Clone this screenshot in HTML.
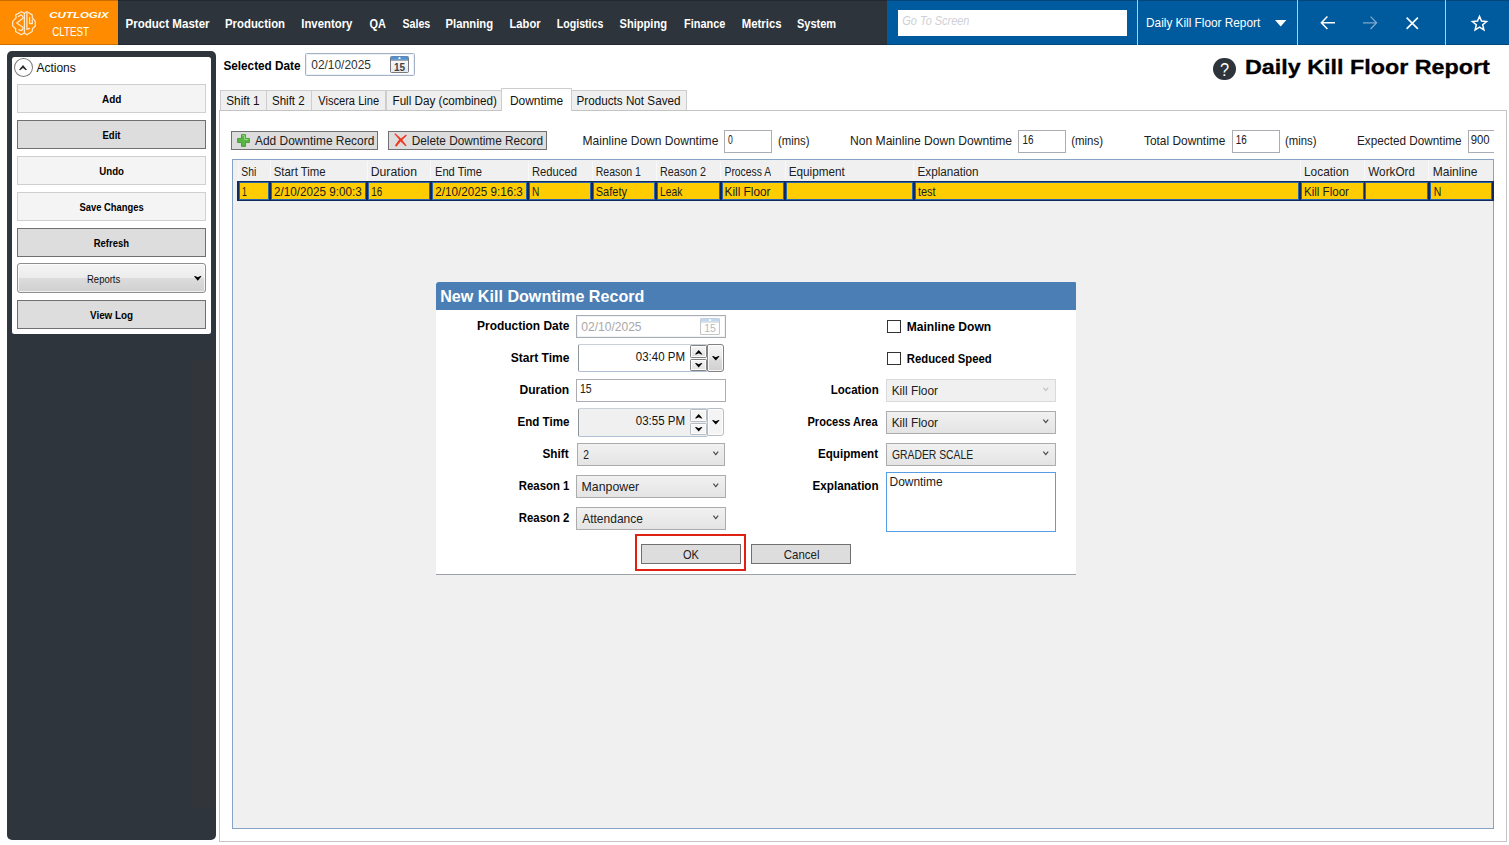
<!DOCTYPE html>
<html><head><meta charset="utf-8"><title>Daily Kill Floor Report</title>
<style>
html,body{margin:0;padding:0;}
body{width:1509px;height:845px;position:relative;overflow:hidden;background:#fff;font-family:"Liberation Sans",sans-serif;font-size:12px;}
.a{position:absolute;box-sizing:border-box;}
.t{position:absolute;white-space:nowrap;line-height:1;transform-origin:0 0;font-family:"Liberation Sans",sans-serif;}
svg{position:absolute;overflow:visible;}
.btn{background:#dddddd;border:1px solid #707070;}
.btnl{background:#f4f4f4;border:1px solid #cfcfcf;}
.combo{background:linear-gradient(#f1f1f1,#e4e4e4);border:1px solid #acacac;}
.inp{background:#fff;border:1px solid #abadb3;}
.tab{background:#efefef;border:1px solid #cdcdcd;border-bottom:none;}
.cell{background:#ffcc00;border:1px solid #2a66ad;}

</style></head>
<body>
<!-- top bar -->
<div class="a" style="left:0;top:0;width:117.5px;height:44.8px;background:#ff8c00"></div>
<div class="a" style="left:117.5px;top:0;width:769.5px;height:44.8px;background:#2d343b"></div>
<div class="a" style="left:887px;top:0;width:622px;height:44.8px;background:#005a9e"></div>
<div class="a" style="left:0;top:0;width:1509px;height:1px;background:rgba(0,0,0,.22)"></div>
<div class="a" style="left:0;top:43.8px;width:1509px;height:1px;background:rgba(0,0,0,.2)"></div>
<div class="a" style="left:897.5px;top:10px;width:229.3px;height:25.5px;background:#fff"></div>
<div class="a" style="left:1136.6px;top:0;width:1px;height:44.8px;background:rgba(255,255,255,.7)"></div>
<div class="a" style="left:1296.6px;top:0;width:1px;height:44.8px;background:rgba(255,255,255,.7)"></div>
<div class="a" style="left:1444.6px;top:0;width:1px;height:44.8px;background:rgba(255,255,255,.7)"></div>
<!-- logo brain -->
<svg style="left:12px;top:11.2px" width="24" height="24.4" viewBox="0 0 24 24.4" fill="none" stroke="#ffe9cc" stroke-width="1.25" stroke-linecap="round" stroke-linejoin="round">
<path d="M12.3 2.3 9.3 0.7 3.7 3.9 4.1 6.9 0.7 10.4V15L3.7 17.8 3.5 20.5 9.3 23.7 12.3 22"/>
<path d="M12.3 2.3 14.9 0.7 20.2 3.9 20.4 6.9 23.3 10.4V15L20.4 17.8 20.2 20.5 14.9 23.7 12.3 22"/>
<path d="M12.4 2.4V22"/>
<path d="M6.2 5.5 9.3 3.9 11 5.8V7.3L4.7 12.1 10.9 16.2V18.2L9.3 19.6 6.8 18.8"/>
<path d="M14.9 2.2V18.4L17.6 17.4"/>
<path d="M17.6 6.4V12.6H20.3V9"/>
</svg>
<!-- top icons -->
<svg style="left:1274.5px;top:19.5px" width="11.4" height="6.6" viewBox="0 0 11.4 6.6"><path d="M0 0h11.4L5.7 6.6z" fill="#fff"/></svg>
<svg style="left:1320px;top:15px" width="16" height="16" viewBox="0 0 16 16" fill="none" stroke="#fff" stroke-width="1.5"><path d="M15 7.8H1.6M7.4 1.6 1.4 7.8 7.4 14"/></svg>
<svg style="left:1362px;top:15px" width="16" height="16" viewBox="0 0 16 16" fill="none" stroke="#7fa9cc" stroke-width="1.3"><path d="M1 7.8h13.4M8.6 1.6 14.6 7.8 8.6 14"/></svg>
<svg style="left:1405.5px;top:16.8px" width="12.5" height="12.5" viewBox="0 0 12.5 12.5" fill="none" stroke="#fff" stroke-width="1.6"><path d="M.6.6 11.9 11.9M11.9.6.6 11.9"/></svg>
<svg style="left:1470.5px;top:14.8px" width="17" height="16" viewBox="0 0 17 16" fill="none" stroke="#fff" stroke-width="1.5" stroke-linejoin="miter"><path d="M8.5 1.4 10.5 6.1 15.6 6.5 11.7 9.8 12.9 14.8 8.5 12.1 4.1 14.8 5.3 9.8 1.4 6.5 6.5 6.1Z"/></svg>
<!-- help icon -->
<div class="a" style="left:1213.3px;top:57.7px;width:22.8px;height:22.8px;border-radius:50%;background:#2d343b"></div>

<!-- sidebar -->
<div class="a" style="left:6.8px;top:51.2px;width:209.6px;height:788.8px;background:#2e353d;border-radius:5px"></div>
<div class="a" style="left:191.8px;top:359px;width:24.4px;height:448.3px;background:#32353a"></div>
<div class="a" style="left:12.2px;top:57px;width:198.8px;height:277.3px;background:#fff;border-radius:2.5px"></div>
<div class="a" style="left:13.6px;top:58.1px;width:19.2px;height:19.3px;border-radius:50%;border:1.5px solid #7a7a7a"></div>
<svg style="left:19.1px;top:65px" width="8" height="5.3" viewBox="0 0 7.4 4.5" preserveAspectRatio="none"><path d="M0 4 1.1 4.5 3.7 2.6 6.3 4.5 7.4 4 3.7 0Z" fill="#2b2b2b"/></svg>
<div class="a btnl" style="left:17.4px;top:83.6px;width:188.2px;height:29.6px"></div>
<div class="a btn"  style="left:17.4px;top:119.6px;width:188.2px;height:29.6px"></div>
<div class="a btnl" style="left:17.4px;top:155.6px;width:188.2px;height:29.6px"></div>
<div class="a btnl" style="left:17.4px;top:191.6px;width:188.2px;height:29.6px"></div>
<div class="a btn"  style="left:17.4px;top:227.6px;width:188.2px;height:29.6px"></div>
<div class="a" style="left:17.4px;top:263.4px;width:188.2px;height:29.8px;border:1px solid #8e8e8e;border-radius:3px;background:linear-gradient(#f4f4f4 0%,#ececec 48%,#dcdcdc 52%,#d0d0d0 100%);box-shadow:inset 0 0 0 1px rgba(255,255,255,.7)"></div>
<svg style="left:194.3px;top:275.8px" width="7.5" height="4.7" viewBox="0 0 7.4 4.5" preserveAspectRatio="none"><path d="M0 .3 1.1 0 3.7 1.2 6.3 0 7.4 .3 3.7 4.5Z" fill="#000"/></svg>
<div class="a btn"  style="left:17.4px;top:299.6px;width:188.2px;height:29.6px"></div>

<!-- date input -->
<div class="a" style="left:305.3px;top:52.8px;width:110px;height:23px;background:#fff;border:1px solid #a3b2c6;border-radius:1.5px;box-shadow:inset 0 0 0 1px #edf1f6"></div>
<svg style="left:390px;top:55.8px" width="19" height="17" viewBox="0 0 19 17">
<defs><linearGradient id="cg" x1="0" y1="0" x2="0" y2="1"><stop offset="0" stop-color="#fff"/><stop offset="1" stop-color="#e4e8ee"/></linearGradient></defs>
<rect x=".5" y=".5" width="18" height="16" rx="1" fill="url(#cg)" stroke="#767a80"/>
<rect x=".9" y=".5" width="17.2" height="3.3" fill="#4f92d8"/>
<rect x=".5" y="3.8" width="18" height=".8" fill="#6d7278"/>
<circle cx="9.5" cy="2.2" r="1.1" fill="#fff"/>
<text x="9.6" y="14.5" font-family="Liberation Sans, sans-serif" font-size="10" font-weight="bold" text-anchor="middle" fill="#444">15</text>
</svg>

<!-- tab panel -->
<div class="a tab" style="left:220.4px;top:90.4px;width:46.2px;height:20.4px"></div>
<div class="a tab" style="left:266.2px;top:90.4px;width:45.4px;height:20.4px"></div>
<div class="a tab" style="left:311.3px;top:90.4px;width:75.2px;height:20.4px"></div>
<div class="a tab" style="left:386.2px;top:90.4px;width:116px;height:20.4px"></div>
<div class="a tab" style="left:571.4px;top:90.4px;width:115.6px;height:20.4px"></div>
<div class="a" style="left:218.8px;top:110.2px;width:1288.6px;height:732px;background:#fff;border:1px solid #c4c4c4"></div>
<div class="a tab" style="left:501.4px;top:88.3px;width:70.8px;height:23.2px;background:#fff"></div>

<!-- toolbar -->
<div class="a btn" style="left:231.2px;top:131.4px;width:147px;height:18.2px"></div>
<div class="a btn" style="left:388.2px;top:131.4px;width:159.2px;height:18.2px"></div>
<svg style="left:237.2px;top:133.5px" width="13" height="13" viewBox="0 0 12.8 12.8"><path d="M4.4.6h4v3.8h3.8v4H8.4v3.8h-4V8.4H.6v-4h3.8z" fill="#58b544" stroke="#3f9c30" stroke-width=".9" stroke-linejoin="round"/><path d="M5.3 1.6h2.2v3.8h3.6" fill="none" stroke="#9cdc8a" stroke-width=".9"/></svg>
<svg style="left:394px;top:133.4px" width="13.2" height="14" viewBox="0 0 13.2 14" fill="#ee3b1f"><path d="M.3 1 1.2.2 7 5.6 12 1.4 12.9 2.4 8.3 7 12.6 12.4 11.6 13.2 6.6 8.4 2.4 13.8.9 12.6 5.2 6.6Z"/></svg>
<div class="a inp" style="left:724.4px;top:130.4px;width:47.8px;height:22.2px"></div>
<div class="a inp" style="left:1018px;top:130.4px;width:47.8px;height:22.2px"></div>
<div class="a inp" style="left:1232px;top:130.4px;width:47.8px;height:22.2px"></div>
<div class="a inp" style="left:1467.6px;top:130.4px;width:26.8px;height:22.2px;border-right:none"></div>

<!-- grid -->
<div class="a" style="left:231.6px;top:159.4px;width:1262.8px;height:669.8px;background:#f0f0f0;border:1px solid #86a2c5"></div>
<div class="a" style="left:237.4px;top:181px;width:1256.2px;height:19.8px;background:#10295f"></div>
<div class="a cell" style="left:239.00px;top:182.1px;width:30.10px;height:17.7px"></div>
<div class="a cell" style="left:270.90px;top:182.1px;width:95.20px;height:17.7px"></div>
<div class="a cell" style="left:367.90px;top:182.1px;width:61.95px;height:17.7px"></div>
<div class="a cell" style="left:431.65px;top:182.1px;width:95.45px;height:17.7px"></div>
<div class="a cell" style="left:528.90px;top:182.1px;width:62.20px;height:17.7px"></div>
<div class="a cell" style="left:592.90px;top:182.1px;width:62.45px;height:17.7px"></div>
<div class="a cell" style="left:657.15px;top:182.1px;width:62.70px;height:17.7px"></div>
<div class="a cell" style="left:721.65px;top:182.1px;width:62.45px;height:17.7px"></div>
<div class="a cell" style="left:785.90px;top:182.1px;width:126.95px;height:17.7px"></div>
<div class="a cell" style="left:914.65px;top:182.1px;width:384.45px;height:17.7px"></div>
<div class="a cell" style="left:1300.90px;top:182.1px;width:62.70px;height:17.7px"></div>
<div class="a cell" style="left:1365.40px;top:182.1px;width:62.45px;height:17.7px"></div>
<div class="a cell" style="left:1429.65px;top:182.1px;width:62.85px;height:17.7px"></div>
<div class="a" style="left:238.10px;top:161px;width:1px;height:19.5px;background:#f9f9f9"></div>
<div class="a" style="left:269.50px;top:161px;width:1px;height:19.5px;background:#f9f9f9"></div>
<div class="a" style="left:366.50px;top:161px;width:1px;height:19.5px;background:#f9f9f9"></div>
<div class="a" style="left:430.25px;top:161px;width:1px;height:19.5px;background:#f9f9f9"></div>
<div class="a" style="left:527.50px;top:161px;width:1px;height:19.5px;background:#f9f9f9"></div>
<div class="a" style="left:591.50px;top:161px;width:1px;height:19.5px;background:#f9f9f9"></div>
<div class="a" style="left:655.75px;top:161px;width:1px;height:19.5px;background:#f9f9f9"></div>
<div class="a" style="left:720.25px;top:161px;width:1px;height:19.5px;background:#f9f9f9"></div>
<div class="a" style="left:784.50px;top:161px;width:1px;height:19.5px;background:#f9f9f9"></div>
<div class="a" style="left:913.25px;top:161px;width:1px;height:19.5px;background:#f9f9f9"></div>
<div class="a" style="left:1299.50px;top:161px;width:1px;height:19.5px;background:#f9f9f9"></div>
<div class="a" style="left:1364.00px;top:161px;width:1px;height:19.5px;background:#f9f9f9"></div>
<div class="a" style="left:1428.25px;top:161px;width:1px;height:19.5px;background:#f9f9f9"></div>
<!-- dialog -->
<div class="a" style="left:436.2px;top:282.4px;width:639.6px;height:292.4px;background:#fff;border-radius:3px 1px 0 0;border-bottom:1px solid #9aa0a6"></div>
<div class="a" style="left:436.2px;top:282.4px;width:639.6px;height:27.7px;background:#4a7eb4;border-radius:3px 1px 0 0"></div>
<!-- prod date -->
<div class="a" style="left:576.2px;top:315px;width:149.6px;height:22.6px;background:#fff;border:1px solid #a6adb6;box-shadow:inset 0 0 0 1px #f3f3f3"></div>
<svg style="left:700px;top:318px;opacity:.42" width="20" height="17" viewBox="0 0 19 17" preserveAspectRatio="none">
<rect x=".5" y=".5" width="18" height="16" rx="1" fill="#fff" stroke="#767a80"/>
<rect x=".9" y=".5" width="17.2" height="3.3" fill="#6fa4de"/>
<rect x=".5" y="3.8" width="18" height=".8" fill="#8d9298"/>
<circle cx="9.5" cy="2.2" r="1.1" fill="#fff"/>
<text x="9.6" y="14.5" font-family="Liberation Sans, sans-serif" font-size="10" text-anchor="middle" fill="#555">15</text>
</svg>
<!-- start time -->
<div class="a" style="left:578px;top:344.3px;width:130px;height:28.2px;background:#fff;border:1px solid #c9d0d9;border-left-color:#8f949a;border-bottom-color:#b1c1d5;border-radius:2px"></div>
<div class="a" style="left:690.1px;top:345.1px;width:16.7px;height:12.6px;border:1.2px solid #828282;border-radius:1.2px;background:linear-gradient(#f6f6f6,#e0e0e0);box-shadow:inset 0 0 0 1px rgba(255,255,255,.85)"></div>
<div class="a" style="left:690.1px;top:359px;width:16.7px;height:12px;border:1.2px solid #828282;border-radius:1.2px;background:linear-gradient(#f6f6f6,#e0e0e0);box-shadow:inset 0 0 0 1px rgba(255,255,255,.85)"></div>
<div class="a" style="left:707.2px;top:344.2px;width:16.9px;height:27.5px;border:1.2px solid #828282;border-radius:2px 3px 3px 2px;background:linear-gradient(#f6f6f6 0%,#ececec 45%,#dadada 60%,#d0d0d0 100%);box-shadow:inset 0 0 0 1px rgba(255,255,255,.8)"></div>
<svg style="left:694.8px;top:349.8px" width="7.4" height="4.5" viewBox="0 0 7.4 4.5"><path d="M0 4.2 1.1 4.5 3.7 3.3 6.3 4.5 7.4 4.2 3.7 0Z" fill="#000"/></svg>
<svg style="left:694.8px;top:362.8px" width="7.4" height="4.5" viewBox="0 0 7.4 4.5"><path d="M0 .3 1.1 0 3.7 1.2 6.3 0 7.4 .3 3.7 4.5Z" fill="#000"/></svg>
<svg style="left:711.7px;top:355.8px" width="7.6" height="4.6" viewBox="0 0 7.4 4.5"><path d="M0 .3 1.1 0 3.7 1.2 6.3 0 7.4 .3 3.7 4.5Z" fill="#000"/></svg>
<!-- duration -->
<div class="a inp" style="left:576.2px;top:379.4px;width:149.6px;height:22.6px"></div>
<!-- end time -->
<div class="a" style="left:578px;top:408.4px;width:130px;height:28.2px;background:#f0f0f0;border:1px solid #c9d0d9;border-left-color:#8f949a;border-bottom-color:#b1c1d5;border-radius:2px"></div>
<div class="a" style="left:690.1px;top:409.2px;width:16.7px;height:12.6px;border:1.2px solid #b7bdc4;border-radius:1.2px;background:#f5f5f5;box-shadow:inset 0 0 0 1px rgba(255,255,255,.8)"></div>
<div class="a" style="left:690.1px;top:423.1px;width:16.7px;height:12px;border:1.2px solid #b7bdc4;border-radius:1.2px;background:#f5f5f5;box-shadow:inset 0 0 0 1px rgba(255,255,255,.8)"></div>
<div class="a" style="left:707.2px;top:408.3px;width:16.9px;height:27.5px;border:1.2px solid #b7bdc4;border-radius:2px 3px 3px 2px;background:#f4f4f4;box-shadow:inset 0 0 0 1px rgba(255,255,255,.8)"></div>
<svg style="left:694.8px;top:413.9px" width="7.4" height="4.5" viewBox="0 0 7.4 4.5"><path d="M0 4.2 1.1 4.5 3.7 3.3 6.3 4.5 7.4 4.2 3.7 0Z" fill="#000"/></svg>
<svg style="left:694.8px;top:426.9px" width="7.4" height="4.5" viewBox="0 0 7.4 4.5"><path d="M0 .3 1.1 0 3.7 1.2 6.3 0 7.4 .3 3.7 4.5Z" fill="#000"/></svg>
<svg style="left:711.7px;top:419.9px" width="7.6" height="4.6" viewBox="0 0 7.4 4.5"><path d="M0 .3 1.1 0 3.7 1.2 6.3 0 7.4 .3 3.7 4.5Z" fill="#000"/></svg>
<!-- combos left -->
<div class="a combo" style="left:577px;top:443.4px;width:148.2px;height:22.6px"></div>
<div class="a combo" style="left:576.2px;top:475.4px;width:149.6px;height:22.6px"></div>
<div class="a combo" style="left:576.2px;top:507.2px;width:149.6px;height:22.6px"></div>
<!-- right side -->
<div class="a" style="left:887px;top:320px;width:13.6px;height:13.2px;background:#fff;border:1px solid #333"></div>
<div class="a" style="left:887px;top:352px;width:13.6px;height:13.2px;background:#fff;border:1px solid #333"></div>
<div class="a" style="left:886.2px;top:379.4px;width:169.6px;height:22.6px;background:#f0f0f0;border:1px solid #d9d9d9"></div>
<div class="a combo" style="left:886.2px;top:411.2px;width:169.6px;height:22.6px"></div>
<div class="a combo" style="left:886.2px;top:443.4px;width:169.6px;height:22.6px"></div>
<div class="a" style="left:886.2px;top:472px;width:169.6px;height:59.8px;background:#fff;border:1px solid #569de5"></div>
<!-- buttons -->
<div class="a" style="left:634.8px;top:534.4px;width:110.8px;height:36.6px;border:2.3px solid #de2111"></div>
<div class="a btn" style="left:641.2px;top:544.2px;width:100px;height:19.6px"></div>
<div class="a btn" style="left:751.2px;top:544.2px;width:99.6px;height:19.6px"></div>
<svg style="left:712.6px;top:451.2px" width="5.6" height="4.6" viewBox="0 0 5.6 4.6" fill="none" stroke="#444" stroke-width="1.1"><path d="M.4 .6 2.8 3.6 5.2 .6"/></svg>
<svg style="left:713.4px;top:483.4px" width="5.6" height="4.6" viewBox="0 0 5.6 4.6" fill="none" stroke="#444" stroke-width="1.1"><path d="M.4 .6 2.8 3.6 5.2 .6"/></svg>
<svg style="left:713.4px;top:515.2px" width="5.6" height="4.6" viewBox="0 0 5.6 4.6" fill="none" stroke="#444" stroke-width="1.1"><path d="M.4 .6 2.8 3.6 5.2 .6"/></svg>
<svg style="left:1043.2px;top:387.4px" width="5.6" height="4.6" viewBox="0 0 5.6 4.6" fill="none" stroke="#c0c0c0" stroke-width="1.1"><path d="M.4 .6 2.8 3.6 5.2 .6"/></svg>
<svg style="left:1043.2px;top:419.2px" width="5.6" height="4.6" viewBox="0 0 5.6 4.6" fill="none" stroke="#444" stroke-width="1.1"><path d="M.4 .6 2.8 3.6 5.2 .6"/></svg>
<svg style="left:1043.2px;top:451.2px" width="5.6" height="4.6" viewBox="0 0 5.6 4.6" fill="none" stroke="#444" stroke-width="1.1"><path d="M.4 .6 2.8 3.6 5.2 .6"/></svg>

<svg style="left:0;top:0" width="1509" height="845" viewBox="0 0 1509 845" font-family="Liberation Sans, sans-serif"><defs><clipPath id="c47"><rect x="239.25" y="164.00" width="16.95" height="16.80"/></clipPath><clipPath id="c54"><rect x="722.50" y="164.00" width="48.50" height="16.80"/></clipPath><clipPath id="c58"><rect x="1366.25" y="164.00" width="48.35" height="16.80"/></clipPath></defs>
<text transform="translate(125.50 27.55) scale(0.8762 1)" font-size="13.2" fill="#fff" font-weight="bold">Product Master</text>
<text transform="translate(225.00 27.55) scale(0.8628 1)" font-size="13.2" fill="#fff" font-weight="bold">Production</text>
<text transform="translate(301.25 27.55) scale(0.8622 1)" font-size="13.2" fill="#fff" font-weight="bold">Inventory</text>
<text transform="translate(369.50 27.55) scale(0.8268 1)" font-size="13.2" fill="#fff" font-weight="bold">QA</text>
<text transform="translate(402.50 27.55) scale(0.8058 1)" font-size="13.2" fill="#fff" font-weight="bold">Sales</text>
<text transform="translate(445.50 27.55) scale(0.8539 1)" font-size="13.2" fill="#fff" font-weight="bold">Planning</text>
<text transform="translate(509.50 27.55) scale(0.8493 1)" font-size="13.2" fill="#fff" font-weight="bold">Labor</text>
<text transform="translate(556.75 27.55) scale(0.8036 1)" font-size="13.2" fill="#fff" font-weight="bold">Logistics</text>
<text transform="translate(619.50 27.55) scale(0.8430 1)" font-size="13.2" fill="#fff" font-weight="bold">Shipping</text>
<text transform="translate(684.00 27.55) scale(0.8283 1)" font-size="13.2" fill="#fff" font-weight="bold">Finance</text>
<text transform="translate(741.75 27.55) scale(0.8617 1)" font-size="13.2" fill="#fff" font-weight="bold">Metrics</text>
<text transform="translate(797.00 27.55) scale(0.8335 1)" font-size="13.2" fill="#fff" font-weight="bold">System</text>
<text transform="translate(49.30 18.40) scale(1.3213 1)" font-size="8.7" fill="#fff" font-weight="bold" font-style="italic">CUTLOGIX</text>
<text transform="translate(52.20 35.50) scale(0.7785 1)" font-size="12.6" fill="#fff">CLTEST</text>
<text transform="translate(902.30 25.45) scale(0.8760 1)" font-size="12.5" fill="#cfcfd6" font-style="italic">Go To Screen</text>
<text transform="translate(1146.06 27.20) scale(0.9379 1)" font-size="12.6" fill="#fff">Daily Kill Floor Report</text>
<text transform="translate(1245.02 73.85) scale(1.1844 1)" font-size="19.7" fill="#000" font-weight="bold" stroke="#000" stroke-width=".3">Daily Kill Floor Report</text>
<text transform="translate(1219.90 76.30) scale(0.9000 1)" font-size="18.2" fill="#fff">?</text>
<text transform="translate(36.40 72.40) scale(0.9694 1)" font-size="12.4" fill="#111">Actions</text>
<text transform="translate(102.00 102.50) scale(0.9074 1)" font-size="11" fill="#000" font-weight="bold">Add</text>
<text transform="translate(102.50 138.50) scale(0.8644 1)" font-size="11" fill="#000" font-weight="bold">Edit</text>
<text transform="translate(99.25 174.50) scale(0.8808 1)" font-size="11" fill="#000" font-weight="bold">Undo</text>
<text transform="translate(79.50 210.50) scale(0.8557 1)" font-size="11" fill="#000" font-weight="bold">Save Changes</text>
<text transform="translate(93.75 246.50) scale(0.8608 1)" font-size="11" fill="#000" font-weight="bold">Refresh</text>
<text transform="translate(90.00 318.50) scale(0.8973 1)" font-size="11" fill="#000" font-weight="bold">View Log</text>
<text transform="translate(87.00 282.50) scale(0.8650 1)" font-size="11" fill="#111">Reports</text>
<text transform="translate(223.40 69.80) scale(0.9055 1)" font-size="13" fill="#000" font-weight="bold">Selected Date</text>
<text transform="translate(311.25 68.75) scale(0.9936 1)" font-size="12" fill="#333">02/10/2025</text>
<text transform="translate(226.25 105.30) scale(0.9827 1)" font-size="12" fill="#111">Shift 1</text>
<text transform="translate(272.00 105.30) scale(0.9608 1)" font-size="12" fill="#111">Shift 2</text>
<text transform="translate(318.25 105.30) scale(0.9260 1)" font-size="12" fill="#111">Viscera Line</text>
<text transform="translate(392.50 105.30) scale(0.9733 1)" font-size="12" fill="#111">Full Day (combined)</text>
<text transform="translate(509.90 104.70) scale(0.9967 1)" font-size="12" fill="#111">Downtime</text>
<text transform="translate(576.50 105.30) scale(0.9760 1)" font-size="12" fill="#111">Products Not Saved</text>
<text transform="translate(255.00 145.00) scale(0.9947 1)" font-size="12" fill="#202020">Add Downtime Record</text>
<text transform="translate(411.75 145.00) scale(0.9852 1)" font-size="12" fill="#202020">Delete Downtime Record</text>
<text transform="translate(582.50 145.00) scale(1.0040 1)" font-size="12" fill="#202020">Mainline Down Downtime</text>
<text transform="translate(728.00 143.75) scale(0.7143 1)" font-size="12" fill="#202020">0</text>
<text transform="translate(778.00 145.00) scale(0.9450 1)" font-size="12" fill="#202020">(mins)</text>
<text transform="translate(850.00 145.00) scale(1.0089 1)" font-size="12" fill="#202020">Non Mainline Down Downtime</text>
<text transform="translate(1022.50 143.75) scale(0.8227 1)" font-size="12" fill="#202020">16</text>
<text transform="translate(1071.25 145.00) scale(0.9525 1)" font-size="12" fill="#202020">(mins)</text>
<text transform="translate(1144.00 145.00) scale(0.9926 1)" font-size="12" fill="#202020">Total Downtime</text>
<text transform="translate(1235.75 143.75) scale(0.8227 1)" font-size="12" fill="#202020">16</text>
<text transform="translate(1285.00 145.00) scale(0.9450 1)" font-size="12" fill="#202020">(mins)</text>
<text transform="translate(1357.00 145.00) scale(0.9809 1)" font-size="12" fill="#202020">Expected Downtime</text>
<text transform="translate(1470.75 143.75) scale(0.9461 1)" font-size="12" fill="#202020">900</text>
<g clip-path="url(#c47)"><text transform="translate(241.25 176.00) scale(0.8611 1)" font-size="12" fill="#202020">Shift</text></g>
<text transform="translate(273.75 176.00) scale(0.9507 1)" font-size="12" fill="#202020">Start Time</text>
<text transform="translate(370.75 176.00) scale(1.0183 1)" font-size="12" fill="#202020">Duration</text>
<text transform="translate(435.00 176.00) scale(0.9271 1)" font-size="12" fill="#202020">End Time</text>
<text transform="translate(532.00 176.00) scale(0.9343 1)" font-size="12" fill="#202020">Reduced</text>
<text transform="translate(595.75 176.00) scale(0.8802 1)" font-size="12" fill="#202020">Reason 1</text>
<text transform="translate(660.00 176.00) scale(0.8947 1)" font-size="12" fill="#202020">Reason 2</text>
<g clip-path="url(#c54)"><text transform="translate(724.50 176.00) scale(0.8638 1)" font-size="12" fill="#202020">Process Area</text></g>
<text transform="translate(788.75 176.00) scale(0.9779 1)" font-size="12" fill="#202020">Equipment</text>
<text transform="translate(917.50 176.00) scale(0.9752 1)" font-size="12" fill="#202020">Explanation</text>
<text transform="translate(1304.00 176.00) scale(0.9900 1)" font-size="12" fill="#202020">Location</text>
<g clip-path="url(#c58)"><text transform="translate(1368.25 176.00) scale(0.9794 1)" font-size="12" fill="#202020">WorkOrder</text></g>
<text transform="translate(1432.75 176.00) scale(0.9997 1)" font-size="12" fill="#202020">Mainline</text>
<text transform="translate(242.00 196.20) scale(0.7143 1)" font-size="12" fill="#202020">1</text>
<text transform="translate(274.10 196.20) scale(0.9723 1)" font-size="12" fill="#202020">2/10/2025 9:00:3</text>
<text transform="translate(371.25 196.20) scale(0.8227 1)" font-size="12" fill="#202020">16</text>
<text transform="translate(435.30 196.20) scale(0.9728 1)" font-size="12" fill="#202020">2/10/2025 9:16:3</text>
<text transform="translate(532.00 196.20) scale(0.8438 1)" font-size="12" fill="#202020">N</text>
<text transform="translate(595.75 196.20) scale(0.9186 1)" font-size="12" fill="#202020">Safety</text>
<text transform="translate(660.00 196.20) scale(0.8604 1)" font-size="12" fill="#202020">Leak</text>
<text transform="translate(724.50 196.20) scale(0.9854 1)" font-size="12" fill="#202020">Kill Floor</text>
<text transform="translate(918.00 196.20) scale(0.9121 1)" font-size="12" fill="#202020">test</text>
<text transform="translate(1304.00 196.20) scale(0.9640 1)" font-size="12" fill="#202020">Kill Floor</text>
<text transform="translate(1433.75 196.20) scale(0.8750 1)" font-size="12" fill="#202020">N</text>
<text transform="translate(440.24 302.00) scale(1.0079 1)" font-size="16" fill="#fff" font-weight="bold">New Kill Downtime Record</text>
<text transform="translate(477.00 330.00) scale(0.9210 1)" font-size="13" fill="#000" font-weight="bold">Production Date</text>
<text transform="translate(510.75 361.50) scale(0.9270 1)" font-size="13" fill="#000" font-weight="bold">Start Time</text>
<text transform="translate(519.50 393.75) scale(0.9299 1)" font-size="13" fill="#000" font-weight="bold">Duration</text>
<text transform="translate(517.50 425.75) scale(0.8916 1)" font-size="13" fill="#000" font-weight="bold">End Time</text>
<text transform="translate(542.50 457.75) scale(0.9052 1)" font-size="13" fill="#000" font-weight="bold">Shift</text>
<text transform="translate(518.75 489.75) scale(0.8772 1)" font-size="13" fill="#000" font-weight="bold">Reason 1</text>
<text transform="translate(518.75 521.75) scale(0.8772 1)" font-size="13" fill="#000" font-weight="bold">Reason 2</text>
<text transform="translate(830.75 394.25) scale(0.8852 1)" font-size="13" fill="#000" font-weight="bold">Location</text>
<text transform="translate(807.50 426.25) scale(0.8494 1)" font-size="13" fill="#000" font-weight="bold">Process Area</text>
<text transform="translate(818.00 458.25) scale(0.8955 1)" font-size="13" fill="#000" font-weight="bold">Equipment</text>
<text transform="translate(812.50 490.00) scale(0.8985 1)" font-size="13" fill="#000" font-weight="bold">Explanation</text>
<text transform="translate(906.75 331.25) scale(0.9280 1)" font-size="13" fill="#000" font-weight="bold">Mainline Down</text>
<text transform="translate(906.75 363.25) scale(0.8710 1)" font-size="13" fill="#000" font-weight="bold">Reduced Speed</text>
<text transform="translate(581.25 330.50) scale(1.0060 1)" font-size="12" fill="#a8a8a8">02/10/2025</text>
<text transform="translate(635.75 361.25) scale(0.9588 1)" font-size="12" fill="#111">03:40 PM</text>
<text transform="translate(580.00 393.20) scale(0.8776 1)" font-size="12" fill="#202020">15</text>
<text transform="translate(635.75 425.25) scale(0.9588 1)" font-size="12" fill="#111">03:55 PM</text>
<text transform="translate(583.25 458.50) scale(0.8214 1)" font-size="12.5" fill="#202020">2</text>
<text transform="translate(581.61 490.50) scale(0.9860 1)" font-size="12.5" fill="#202020">Manpower</text>
<text transform="translate(582.20 522.50) scale(0.9606 1)" font-size="12.5" fill="#202020">Attendance</text>
<text transform="translate(891.64 394.50) scale(0.9566 1)" font-size="12.5" fill="#202020">Kill Floor</text>
<text transform="translate(891.64 426.50) scale(0.9566 1)" font-size="12.5" fill="#202020">Kill Floor</text>
<text transform="translate(892.00 458.50) scale(0.8299 1)" font-size="12.5" fill="#202020">GRADER SCALE</text>
<text transform="translate(889.50 486.25) scale(0.9967 1)" font-size="12" fill="#202020">Downtime</text>
<text transform="translate(683.00 558.50) scale(0.8813 1)" font-size="12.5" fill="#202020">OK</text>
<text transform="translate(783.75 558.50) scale(0.9178 1)" font-size="12.5" fill="#202020">Cancel</text>
</svg>
</body></html>
